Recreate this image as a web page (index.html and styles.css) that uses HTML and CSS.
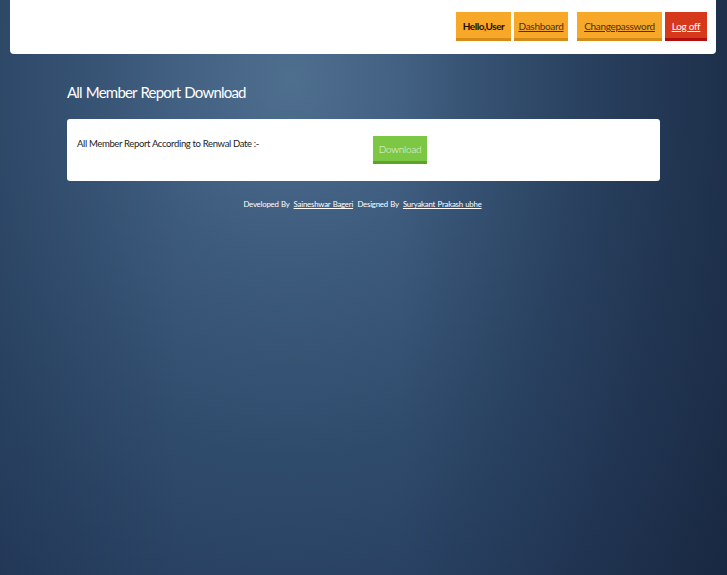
FILE: index.html
```html
<!DOCTYPE html>
<html>
<head>
<meta charset="utf-8">
<link rel="stylesheet" href="styles.css">
</head>
<body>
<header class="topbar">
  <nav class="nav">
    <span class="btn btn-orange hello">Hello,User</span>
    <a class="btn btn-orange link dash" href="#">Dashboard</a>
    <a class="btn btn-orange link wide" href="#">Changepassword</a>
    <a class="btn btn-red link" href="#">Log off</a>
  </nav>
</header>
<main class="container">
  <h1 class="title">All Member Report Download</h1>
  <section class="card">
    <span class="label">All Member Report According to Renwal Date :-</span>
    <a class="download" href="#">Download</a>
  </section>
  <footer class="footer">
    Developed By <a href="#">Saineshwar Bageri</a> Designed By <a href="#">Suryakant Prakash ubhe</a>
  </footer>
</main>
</body>
</html>
```

FILE: styles.css
```css
html, body {
  margin: 0;
  height: 100%;
}
body {
  font-family: Lato, "Liberation Sans", sans-serif;
  background:
    linear-gradient(90deg, rgba(20,32,55,0.15) 0%, rgba(20,32,55,0) 25%, rgba(20,32,55,0) 55%, rgba(15,25,45,0.45) 100%),
    radial-gradient(ellipse 85% 120% at 40% 14%, #4f6f8f 0%, #3c5a7c 28%, #2f4b6c 55%, #273f60 80%, #203452 100%);
  background-color: #1e3250;
  min-height: 575px;
}
.topbar {
  margin: 0 11px 0 10px;
  height: 54px;
  background: #fff;
  border-radius: 0 0 4px 4px;
  display: flex;
  justify-content: flex-end;
  box-sizing: border-box;
  padding: 12px 9px 0 0;
}
.nav {
  display: flex;
  gap: 3px;
  align-items: flex-start;
}
.btn {
  display: flex;
  align-items: center;
  justify-content: center;
  height: 29px;
  padding-top: 1px;
  box-sizing: border-box;
  font-size: 10px;
  letter-spacing: -0.3px;
  white-space: nowrap;
  color: #1a1000;
  text-decoration: none;
}
.btn-orange {
  background: #f8a829;
  border-bottom: 3px solid #d58b16;
}
.hello { width: 55px; font-weight: bold; letter-spacing: -0.5px; }
.dash { width: 54px; }
.btn.link { text-decoration: underline; color: #4a3010; }
.btn-orange.wide { width: 85px; margin-left: 6px; }
.btn-red {
  background: #d6381c;
  border-bottom: 3px solid #b30f0f;
  width: 42px;
  color: #fff !important;
}
.container {
  margin-left: 67px;
  width: 593px;
}
.title {
  margin: 26px 0 0;
  font-weight: normal;
  font-size: 15px;
  letter-spacing: -0.8px;
  word-spacing: 1px;
  line-height: 24px;
  color: #fff;
}
.card {
  margin-top: 15px;
  height: 62px;
  background: #fff;
  border-radius: 3px;
  box-sizing: border-box;
  padding: 17px 10px 0;
  display: flex;
  align-items: flex-start;
}
.label {
  font-size: 9.5px;
  letter-spacing: -0.35px;
  color: #222;
  width: 296px;
  line-height: 14px;
  padding-top: 1px;
}
.download {
  display: flex;
  align-items: center;
  justify-content: center;
  width: 54px;
  height: 28px;
  box-sizing: border-box;
  background: #7cc744;
  border-bottom: 3px solid #5aa42b;
  color: #eaf7e0;
  font-size: 10px;
  font-weight: 300;
  letter-spacing: -0.2px;
  text-decoration: none;
}
.footer {
  margin-top: 18px;
  text-align: center;
  font-size: 7.8px;
  letter-spacing: -0.2px;
  word-spacing: 0.5px;
  color: #fff;
}
.footer a {
  color: #fff;
  margin: 0 2px;
}
```
